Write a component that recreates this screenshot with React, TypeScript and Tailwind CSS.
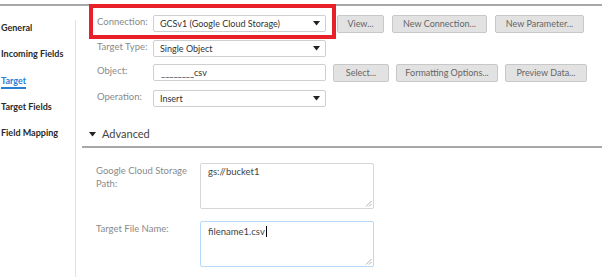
import type { ReactNode } from "react";

const font = { fontFamily: "Lato, 'Noto Sans', sans-serif" };

const navItems = ["General", "Incoming Fields", "Target", "Target Fields", "Field Mapping"];

function Caret() {
  return (
    <svg width="7" height="5" viewBox="0 0 7 5" className="shrink-0">
      <path d="M0 0 H7 L3.5 4.5 Z" fill="#222" />
    </svg>
  );
}

function Select({ value }: { value: string }) {
  return (
    <div className="flex h-[17px] w-[173px] items-center justify-between rounded-[2px] border border-[#cfcfcf] bg-white pl-[6px] pr-[5px] text-[9px] text-[#333]">
      <span>{value}</span>
      <Caret />
    </div>
  );
}

function Input({ value }: { value: ReactNode }) {
  return (
    <div className="flex h-[17px] w-[173px] items-center rounded-[2px] border border-[#cfcfcf] bg-white pl-[7px] text-[9px] text-[#333]">
      {value}
    </div>
  );
}

function Btn({ label, w }: { label: string; w: string }) {
  return (
    <div
      className={`flex h-[18px] items-center justify-center rounded-[2px] border border-[#c8c8c8] bg-[#e2e2e2] text-[9px] text-[#666] ${w}`}
    >
      {label}
    </div>
  );
}

function Row({ label, children }: { label: string; children: ReactNode }) {
  return (
    <div className="flex items-start">
      <div className="w-[56px] pt-[1px] text-[9.5px] leading-[12px] text-[#8a8a8a]">{label}</div>
      {children}
    </div>
  );
}

function Grip() {
  return (
    <svg width="7" height="7" viewBox="0 0 7 7" className="absolute bottom-[1px] right-[1px]">
      <path d="M6.5 1 L1 6.5 M6.5 4 L4 6.5" stroke="#999" strokeWidth="0.8" />
    </svg>
  );
}

function TextArea({ value, active }: { value: string; active?: boolean }) {
  return (
    <div
      className={`relative h-[46px] w-[174px] rounded-[2px] border bg-white pl-[7px] pt-[2px] text-[9.5px] leading-[12px] text-[#444] ${
        active ? "border-[#b5d9f7]" : "border-[#d6d6d6]"
      }`}
    >
      <span>{value}</span>
      {active && <span className="ml-[1px] inline-block h-[11px] w-[1px] translate-y-[2px] bg-black" />}
      <Grip />
    </div>
  );
}

export default function App() {
  return (
    <div className="relative h-[277px] w-[602px] overflow-hidden bg-white" style={font}>
      <div className="mt-[4px] h-[2px] bg-[#a8a8a8]" />
      <div className="flex h-[271px]">
        <nav className="w-[75px] pt-[9px]">
          {navItems.map((item) => (
            <div key={item} className="h-[26.3px] pl-[1px] text-[9px] font-bold leading-[26px] text-[#2a2a2a]">
              {item === "Target" ? (
                <span className="border-b-2 border-[#2a7fd4] pb-[1px] text-[#2a7fd4]">{item}</span>
              ) : (
                item
              )}
            </div>
          ))}
        </nav>
        <div className="mt-[14px] w-[1px] bg-[#e2e2e2]" />
        <main className="flex-1">
          <div className="flex flex-col gap-[7px] pl-[21px] pt-[9px]">
            <Row label="Connection:">
              <Select value="GCSv1 (Google Cloud Storage)" />
              <div className="ml-[11px] flex gap-[8px]">
                <Btn label="View..." w="w-[47px]" />
                <Btn label="New Connection..." w="w-[95px]" />
                <Btn label="New Parameter..." w="w-[89px]" />
              </div>
            </Row>
            <Row label="Target Type:">
              <Select value="Single Object" />
            </Row>
            <Row label="Object:">
              <Input value="________csv" />
              <div className="ml-[7px] flex gap-[7px]">
                <Btn label="Select..." w="w-[56px]" />
                <Btn label="Formatting Options..." w="w-[102px]" />
                <Btn label="Preview Data..." w="w-[82px]" />
              </div>
            </Row>
            <div className="mt-[1px]">
              <Row label="Operation:">
                <Select value="Insert" />
              </Row>
            </div>
          </div>

          <div className="ml-[6px] mt-[19px] flex items-center gap-[6px] pl-[7px] text-[11px] text-[#444]">
            <Caret />
            <span>Advanced</span>
          </div>
          <div className="ml-[6px] mt-[3px] h-[2px] bg-[#a8a8a8]" />

          <div className="flex flex-col gap-[12px] pl-[20px] pt-[15px]">
            <div className="flex items-start">
              <div className="w-[104px] pt-[1px] text-[9.5px] leading-[13px] text-[#8a8a8a]">
                Google Cloud Storage
                <br />
                Path:
              </div>
              <TextArea value="gs://bucket1" />
            </div>
            <div className="flex items-start">
              <div className="w-[104px] pt-[1px] text-[9.5px] leading-[13px] text-[#8a8a8a]">Target File Name:</div>
              <TextArea value="filename1.csv" active />
            </div>
          </div>
        </main>
      </div>

      <div className="absolute left-[89px] top-[4px] h-[35px] w-[247px] border-[4px] border-[#e8202a]" />
    </div>
  );
}
